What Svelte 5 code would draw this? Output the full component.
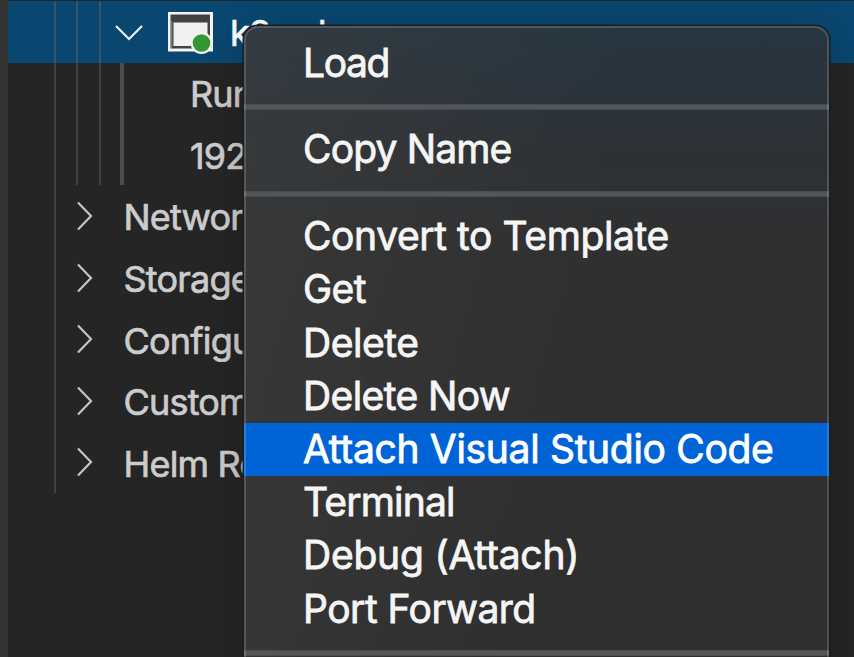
<script>
  const details = ['Run', '192'];

  const folders = ['Networ', 'Storage', 'Configu', 'Custom', 'Helm Re'];

  // spacing: per-label tracking in px
  const groups = [
    [{ label: 'Load', spacing: -1.4 }],
    [{ label: 'Copy Name', spacing: -0.85 }],
    [
      { label: 'Convert to Template', spacing: -0.4 },
      { label: 'Get', spacing: -0.6 },
      { label: 'Delete', spacing: -0.45 },
      { label: 'Delete Now', spacing: -0.6 },
      { label: 'Attach Visual Studio Code', spacing: -0.32, active: true },
      { label: 'Terminal', spacing: -0.8 },
      { label: 'Debug (Attach)', spacing: -0.22 },
      { label: 'Port Forward', spacing: -0.5 },
    ],
    [],
  ];
</script>

<div class="window">
  <div class="gutter"></div>
  <div class="tree">
    <div class="row pod selected">
      <svg class="down" viewBox="0 0 30 18" width="30" height="18">
        <path d="M2 2 L15 15 L28 2" />
      </svg>
      <svg class="icon" viewBox="0 0 48 44" width="48" height="44">
        <rect x="1" y="1" width="45" height="39.5" fill="#f4f4f4" />
        <rect x="3.5" y="3.5" width="39.5" height="34" fill="#424242" />
        <rect x="6.5" y="11.5" width="34" height="23.5" fill="#f0eff1" />
        <rect x="4" y="10" width="1.4" height="27" fill="#777" />
        <circle cx="34.5" cy="32" r="11" fill="#f4f4f4" />
        <circle cx="34.5" cy="32" r="8.8" fill="#329932" />
      </svg>
      <span>k8s-demo</span>
    </div>
    {#each details as d}
      <div class="row detail"><span>{d}</span></div>
    {/each}
    {#each folders as f}
      <div class="row folder">
        <svg viewBox="0 0 17 30" width="17" height="30"><path d="M2 1.5 L15 15 L2 28.5" /></svg>
        <span>{f}</span>
      </div>
    {/each}
    <i class="guide g1"></i>
    <i class="guide g2"></i>
    <i class="guide g3"></i>
    <i class="guide g4"></i>
  </div>

  <div class="menu">
    {#each groups as group, i}
      {#if i > 0}<div class="separator"></div>{/if}
      {#each group as item}
        <div class="item" class:active={item.active}>
          <span style="letter-spacing: {item.spacing}px">{item.label}</span>
        </div>
      {/each}
    {/each}
    <div class="edge"></div>
  </div>
</div>

<style>
  .window {
    position: relative;
    display: flex;
    width: 854px;
    height: 657px;
    overflow: hidden;
    background: #252525;
    font-family: Inter, 'Liberation Sans', sans-serif;
  }
  .gutter {
    width: 8px;
    background: #333333;
  }
  .tree {
    position: relative;
    flex: 1;
    padding-top: 1px;
    font-size: 36px;
    letter-spacing: -0.8px;
    color: #cccccc;
    -webkit-text-stroke: 0.7px currentColor;
  }
  .row {
    display: flex;
    align-items: center;
    height: 61.6px;
    white-space: nowrap;
  }
  .row span {
    padding-top: 1.5px;
  }
  .row svg path {
    fill: none;
    stroke: #c5c5c5;
    stroke-width: 2.2;
  }
  .selected {
    background: #094771;
    color: #ffffff;
  }
  .selected .down path {
    stroke: #eeeeee;
  }
  .down {
    margin: 3px 0 0 106px;
  }
  .icon {
    margin: 3px 15px 0 23px;
  }
  .detail {
    padding-left: 182px;
  }
  .folder svg {
    margin: -1px 30.5px 0 68px;
  }
  .guide {
    position: absolute;
    top: 1px;
    width: 2px;
    height: 184px;
    background: rgba(120, 120, 120, 0.33);
  }
  .g1 { left: 45.5px; height: 492px; }
  .g2 { left: 68px; }
  .g3 { left: 90.5px; }
  .g4 { left: 112px; top: 62.6px; width: 4px; height: 122.5px; background: #4b4b4b; }

  .menu {
    position: absolute;
    left: 244px;
    top: 26px;
    box-sizing: border-box;
    width: 585px;
    height: 660px;
    padding-top: 10.7px;
    border-radius: 14px;
    overflow: hidden;
    background:
      linear-gradient(100deg, rgba(64, 64, 64, 0.5), rgba(48, 48, 48, 0) 55%),
      linear-gradient(#273640 0, #2a333b 65px, #2e3134 130px, #303031 210px, #2f2f2f 100%);
    box-shadow: 0 0 0 1.5px #1b1e20, 0 8px 40px rgba(0, 0, 0, 0.22);
    font-size: 39px;
    color: #f5f5f5;
    -webkit-text-stroke: 0.8px currentColor;
  }
  .item {
    box-sizing: border-box;
    height: 53.2px;
    line-height: 51.4px;
    padding-left: 59px;
    white-space: nowrap;
  }
  .active {
    background: #0064d6;
    color: #ffffff;
  }
  .separator {
    height: 6px;
    margin: 14.2px 0 13.4px;
    background: linear-gradient(#45494c, #54575a 30%, #54575a 70%, #45494c);
  }
  .edge {
    position: absolute;
    inset: 0;
    border: 2px solid rgba(255, 255, 255, 0.16);
    border-radius: 14px;
  }
</style>
